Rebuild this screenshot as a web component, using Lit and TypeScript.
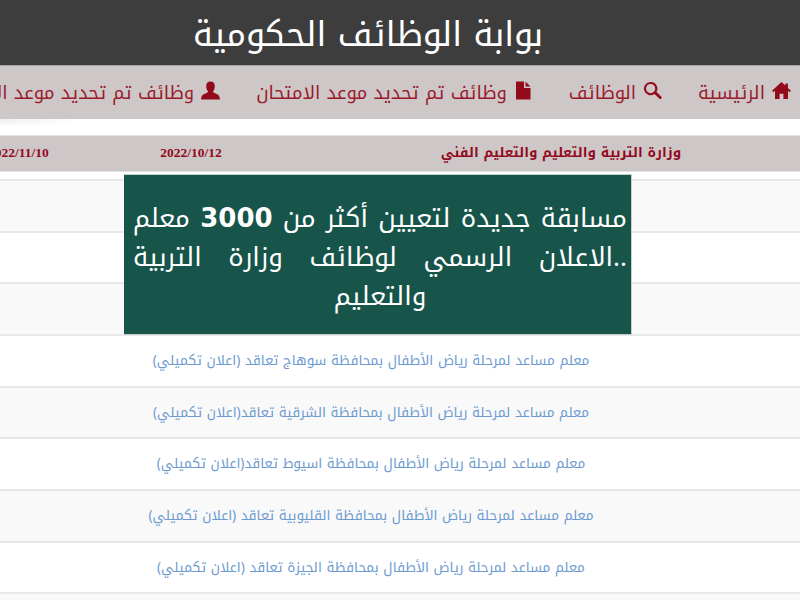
import { LitElement, html, css, svg } from "lit";
import { customElement } from "lit/decorators.js";

const rows = [
  "", "", "",
  "معلم مساعد لمرحلة رياض الأطفال بمحافظة سوهاج تعاقد (اعلان تكميلي)",
  "معلم مساعد لمرحلة رياض الأطفال بمحافظة الشرقية تعاقد(اعلان تكميلي)",
  "معلم مساعد لمرحلة رياض الأطفال بمحافظة اسيوط تعاقد(اعلان تكميلي)",
  "معلم مساعد لمرحلة رياض الأطفال بمحافظة القليوبية تعاقد (اعلان تكميلي)",
  "معلم مساعد لمرحلة رياض الأطفال بمحافظة الجيزة تعاقد (اعلان تكميلي)",
  "",
];

const icons = {
  home: svg`<path d="M9.5 1 L13.4 4.6 V2.4 H15.9 V7 L19 9.8 L17.6 11.2 L16 9.8 V18 H11.4 V12.8 H7.6 V18 H3 V9.8 L1.4 11.2 L0 9.8 Z"/>`,
  search: svg`<path fill-rule="evenodd" d="M7.6 1 a6.6 6.6 0 1 0 3.9 11.9 L16.2 17.6 a1.4 1.4 0 0 0 2-2 L13.5 10.9 A6.6 6.6 0 0 0 7.6 1 Z M7.6 3 a4.6 4.6 0 1 1 0 9.2 a4.6 4.6 0 0 1 0-9.2 Z"/>`,
  file: svg`<path d="M2 0.5 H10 V7 H16.5 V18.5 H2 Z M11.5 0.5 L16.5 5.5 H11.5 Z"/>`,
  user: svg`<path d="M9.5 0.5 C12.4 0.5 13.8 2.6 13.8 5.2 C13.8 7.4 13 9.2 12 10.3 C11.8 11.5 12.8 11.9 15 12.7 C17.6 13.6 18.6 14.6 19 18.5 H0 C0.4 14.6 1.4 13.6 4 12.7 C6.2 11.9 7.2 11.5 7 10.3 C6 9.2 5.2 7.4 5.2 5.2 C5.2 2.6 6.6 0.5 9.5 0.5 Z"/>`,
};

@customElement("app-root")
export class AppRoot extends LitElement {
  static styles = css`
    :host { display: block; width: 800px; height: 600px; overflow: hidden; position: relative; background: #fff; font-family: "Noto Kufi Arabic", "DejaVu Sans", sans-serif; }
    .page { direction: rtl; width: 800px; }
    .head { height: 65px; box-sizing: border-box; background: #3d3d3d; color: #fff; font-size: 34px; line-height: 70px; text-align: center; padding-right: 64px; white-space: nowrap; overflow: hidden; }
    .nav { height: 54px; box-sizing: border-box; background: #cdc7c7; border-top: 1px solid #a8a4a4; display: flex; padding-right: 9px; gap: 36px; white-space: nowrap; color: #9b1a2c; font-size: 18.4px; line-height: 50px; }
    .nav a { display: flex; flex: none; align-items: center; gap: 7px; }
    .nav svg { width: 19px; height: 19px; fill: #930a1a; flex: none; margin-top: -4px; }
    .gap { height: 16px; }
    .thead { height: 37px; background: #cdc7c7; border-top: 1px solid #e2e2e2; border-bottom: 1px solid #e2e2e2; box-sizing: border-box; display: flex; width: 858px; color: #930a1f; font-weight: bold; font-size: 13.6px; line-height: 34px; white-space: nowrap; }
    .t1 { width: 478px; flex: none; text-align: center; }
    .t2 { width: 262px; flex: none; text-align: center; font-family: "Liberation Serif", serif; font-size: 13.5px; }
    .t3 { width: 118px; flex: none; text-align: left; padding-left: 46px; box-sizing: border-box; font-family: "Liberation Serif", serif; font-size: 13.5px; }
    .spacer { height: 9px; border-bottom: 2px solid #e8e8e8; box-sizing: border-box; }
    .rows { width: 858px; }
    .row { width: 858px; height: 51.67px; box-sizing: border-box; border-bottom: 2px solid #e8e8e8; text-align: center; color: #6d9bd1; font-size: 13.67px; line-height: 48px; white-space: nowrap; }
    .row:nth-child(odd) { background: #f9f9f9; }
    .banner { position: absolute; left: 124px; top: 174px; width: 508px; height: 161px; box-sizing: border-box; border: 1px solid #c4d0cd; border-left: none; background: #17544a; color: #fff; font-size: 26px; line-height: 39px; text-align: center; direction: rtl; padding: 24px 4px 0 9px; white-space: nowrap; }
    .banner b { font-family: "DejaVu Sans", sans-serif; }
    .banner div { height: 39px; }
    .j { text-align-last: justify; text-justify: inter-character; }
    .shadow { position: absolute; left: 0; top: 119px; width: 80px; height: 8px; background: radial-gradient(ellipse at 0 0, #eeeeee, #ffffff 70%); }
  `;

  private icon(name: keyof typeof icons) {
    return html`<svg viewBox="0 0 19 19">${icons[name]}</svg>`;
  }

  render() {
    return html`
      <div class="page">
        <div class="head">بوابة الوظائف الحكومية</div>
        <div class="nav">
          <a>${this.icon("home")}الرئيسية</a>
          <a>${this.icon("search")}الوظائف</a>
          <a>${this.icon("file")}وظائف تم تحديد موعد الامتحان</a>
          <a>${this.icon("user")}وظائف تم تحديد موعد الامتحان</a>
        </div>
        <div class="gap"></div>
        <div class="thead">
          <div class="t1">وزارة التربية والتعليم والتعليم الفني</div>
          <div class="t2">2022/10/12</div>
          <div class="t3">2022/11/10</div>
        </div>
        <div class="spacer"></div>
        <div class="rows">${rows.map((r) => html`<div class="row">${r}</div>`)}</div>
      </div>
      <div class="shadow"></div>
      <div class="banner">
        <div class="j">مسابقة جديدة لتعيين أكثر من <b>3000</b> معلم</div>
        <div class="j">..الاعلان الرسمي لوظائف وزارة التربية</div>
        <div>والتعليم</div>
      </div>
    `;
  }
}
